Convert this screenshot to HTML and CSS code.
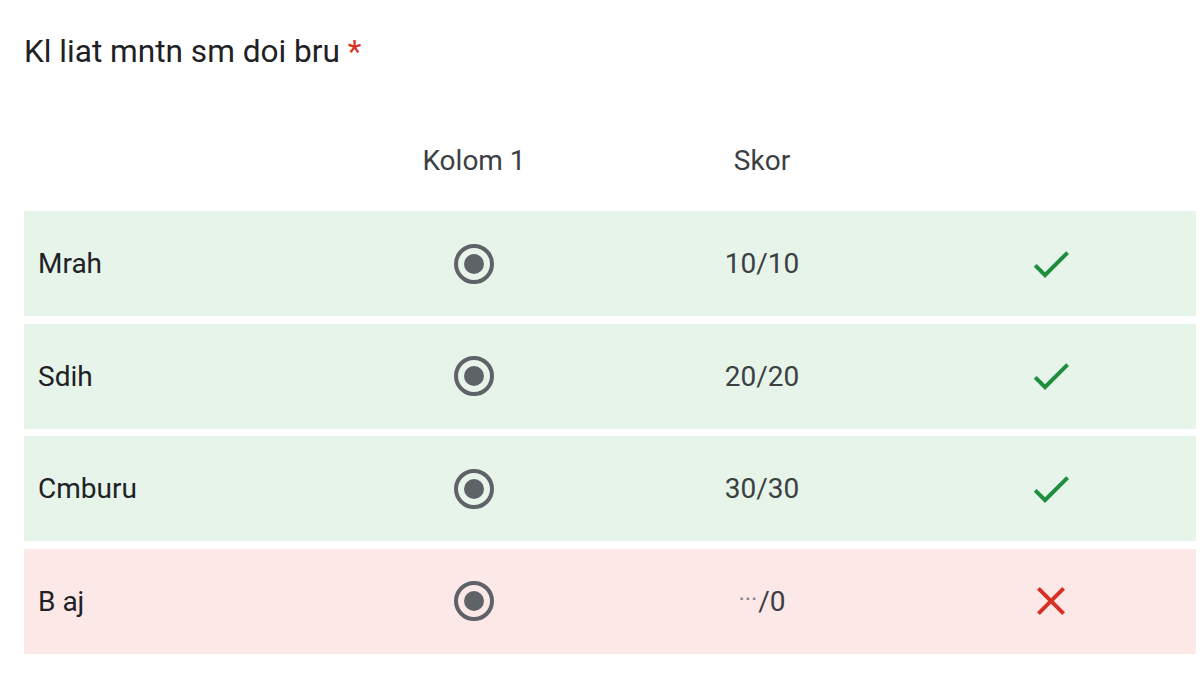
FILE: index.html
```html
<!DOCTYPE html>
<html lang="en">
<head>
    <meta charset="UTF-8">
    <title>Kuis</title>
    <link rel="stylesheet" href="styles.css">
</head>
<body>
    <div class="question">
        <div class="question-title">Kl liat mntn sm doi bru <span class="required">*</span></div>

        <div class="grid-head">
            <div></div>
            <div class="col-head">Kolom 1</div>
            <div class="col-head">Skor</div>
            <div></div>
        </div>

        <div class="grid-row correct">
            <div class="row-label">Mrah</div>
            <div class="cell"><span class="radio"></span></div>
            <div class="cell score">10/10</div>
            <div class="cell">
                <svg class="mark" viewBox="0 0 24 24"><path d="M9 16.17 4.83 12l-1.42 1.41L9 19 21 7l-1.41-1.41z" fill="#1e8e3e"/></svg>
            </div>
        </div>

        <div class="grid-row correct">
            <div class="row-label">Sdih</div>
            <div class="cell"><span class="radio"></span></div>
            <div class="cell score">20/20</div>
            <div class="cell">
                <svg class="mark" viewBox="0 0 24 24"><path d="M9 16.17 4.83 12l-1.42 1.41L9 19 21 7l-1.41-1.41z" fill="#1e8e3e"/></svg>
            </div>
        </div>

        <div class="grid-row correct">
            <div class="row-label">Cmburu</div>
            <div class="cell"><span class="radio"></span></div>
            <div class="cell score">30/30</div>
            <div class="cell">
                <svg class="mark" viewBox="0 0 24 24"><path d="M9 16.17 4.83 12l-1.42 1.41L9 19 21 7l-1.41-1.41z" fill="#1e8e3e"/></svg>
            </div>
        </div>

        <div class="grid-row wrong">
            <div class="row-label">B aj</div>
            <div class="cell"><span class="radio"></span></div>
            <div class="cell score"><span class="dots">···</span>/0</div>
            <div class="cell">
                <svg class="mark" viewBox="0 0 24 24"><path d="M19 6.41 17.59 5 12 10.59 6.41 5 5 6.41 10.59 12 5 17.59 6.41 19 12 13.41 17.59 19 19 17.59 13.41 12z" fill="#d93025"/></svg>
            </div>
        </div>
    </div>
</body>
</html>
```

FILE: styles.css
```css
* {
    margin: 0;
    padding: 0;
    box-sizing: border-box;
}

body {
    font-family: Roboto, 'Liberation Sans', sans-serif;
    background: #ffffff;
    color: #202124;
}

.question {
    padding: 34px 4px 0 24px;
}

.question-title {
    font-size: 31.6px;
    line-height: 36px;
    color: #202124;
}

.required {
    color: #d93025;
}

.grid-head,
.grid-row {
    display: grid;
    grid-template-columns: 306px 288px 288px 1fr;
    align-items: center;
}

.grid-head {
    margin-top: 67px;
    height: 46px;
    margin-bottom: 28px;
}

.col-head {
    text-align: center;
    font-size: 28px;
    color: #3c4043;
}

.grid-row {
    height: 105px;
    margin-bottom: 7.5px;
}

.correct {
    background: #e6f4ea;
}

.wrong {
    background: #fce8e6;
}

.row-label {
    padding-left: 14px;
    font-size: 28px;
    color: #202124;
}

.cell {
    display: flex;
    justify-content: center;
    align-items: center;
}

.score {
    font-size: 28px;
    color: #3c4043;
}

.dots {
    font-size: 24px;
    color: #80868b;
    letter-spacing: 0;
    margin-right: 1px;
    position: relative;
    top: -2px;
}

.radio {
    width: 40px;
    height: 40px;
    border: 4px solid #5f6368;
    border-radius: 50%;
    display: flex;
    justify-content: center;
    align-items: center;
}

.radio::after {
    content: "";
    width: 20px;
    height: 20px;
    border-radius: 50%;
    background: #5f6368;
}

.mark {
    width: 48px;
    height: 48px;
}
```
